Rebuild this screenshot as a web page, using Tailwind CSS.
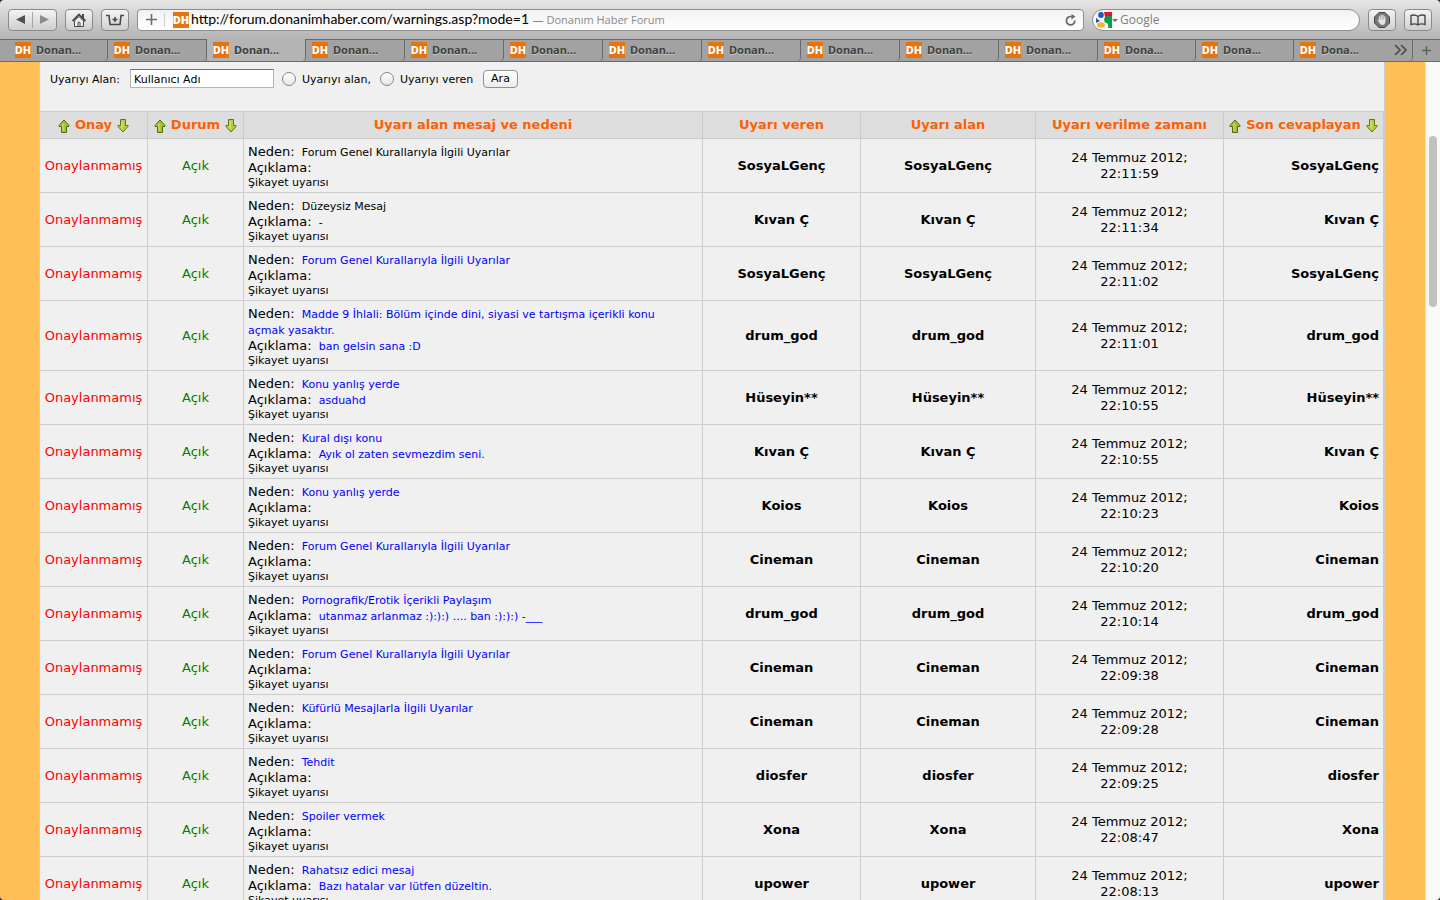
<!DOCTYPE html>
<html lang="tr">
<head>
<meta charset="utf-8">
<title>Donanım Haber Forum</title>
<script src="https://cdn.jsdelivr.net/npm/@tailwindcss/browser@4"></script>
</head>
<body class="flex h-screen flex-col overflow-hidden bg-[#222222] font-['DejaVu_Sans',sans-serif] text-black">

<svg class="hidden">
  <symbol id="up" viewBox="0 0 12 14">
    <path d="M6 1 11 6.500V7.500H8.500V13.500H3.500V7.500H1V6.500Z" fill="#a3c234" stroke="#4f6a0c" stroke-linejoin="round"/>
    <path d="M5 4.500V12" stroke="#cfe37a"/>
  </symbol>
  <symbol id="down" viewBox="0 0 12 14">
    <path d="M6 13 11 7.500V6.500H8.500V.5H3.500V6.500H1V7.500Z" fill="#b4cf45" stroke="#5c7810" stroke-linejoin="round"/>
    <path d="M5 2V10" stroke="#d8ea88"/>
  </symbol>
</svg>

<header class="shrink-0 overflow-hidden rounded-t font-['Open_Sans',sans-serif]">
  <div class="flex h-[39px] items-center bg-linear-to-b from-[#e6e6e6] to-[#b4b4b4] px-2">
    <nav class="flex gap-2" aria-label="Tarayıcı">
      <div class="flex h-[22px] w-[49px] items-center rounded border border-[#8a8a8a] bg-linear-to-b from-[#f4f4f4] to-[#cfcfcf]">
        <button class="flex h-full flex-1 items-center justify-center" aria-label="Geri"><svg class="h-[9px] w-[9px]" viewBox="0 0 9 9"><path d="M9 0V9L0 4.500Z" fill="#505050"/></svg></button>
        <span class="h-4 w-px bg-[#a5a5a5]"></span>
        <button class="flex h-full flex-1 items-center justify-center" aria-label="İleri"><svg class="h-[9px] w-[9px]" viewBox="0 0 9 9"><path d="M0 0V9L9 4.500Z" fill="#8c8c8c"/></svg></button>
      </div>
      <button class="flex h-[22px] w-7 items-center justify-center rounded border border-[#8a8a8a] bg-linear-to-b from-[#f4f4f4] to-[#cfcfcf]" aria-label="Ana sayfa">
        <svg class="h-[14px] w-[14px]" viewBox="0 0 14 14"><path d="M7 3.500 2.500 8V13.500H11.500V8Z" fill="#f0f0f0" stroke="#484848"/><path d="M.5 8 7 1.500 13.500 8" fill="none" stroke="#484848" stroke-width="1.800"/><path d="M10 1H12V6L10 4Z" fill="#484848"/><path d="M6 13V9.500Q7 8.500 8 9.500V13" fill="none" stroke="#484848"/></svg>
      </button>
      <button class="flex h-[22px] w-7 items-center justify-center rounded border border-[#8a8a8a] bg-linear-to-b from-[#f4f4f4] to-[#cfcfcf]" aria-label="Sepet">
        <svg class="h-3 w-[18px]" viewBox="0 0 18 12" fill="none" stroke="#484848" stroke-width="1.600"><path d="M0 1.500H3L4 10.500H14L15 1.500H18M9 3V8M6.500 5.500H11.500"/></svg>
      </button>
    </nav>
    <div class="ml-2 flex h-[22px] min-w-0 flex-1 items-center rounded border border-[#8e8e8e] bg-linear-to-b from-[#f2f2f2] to-white">
      <button class="flex h-[14px] w-[27px] items-center justify-center border-r border-[#cfcfcf]" aria-label="Ekle"><svg class="h-[11px] w-[11px]" viewBox="0 0 11 11"><path d="M5.500 0V11M0 5.500H11" stroke="#6c6c6c" stroke-width="1.600"/></svg></button>
      <span class="ml-2 flex h-4 w-4 shrink-0 items-center justify-center bg-[#e5740f] text-[11px] leading-4 font-extrabold text-white">DH</span>
      <p class="ml-[2px] flex-1 truncate pb-px font-['Lato',sans-serif] text-sm leading-5"><span>http://forum.donanimhaber.com/warnings.asp?mode=1</span> <span class="font-['Open_Sans',sans-serif] text-[11px] text-[#8a8a8a]">— Donanım Haber Forum</span></p>
      <button class="mr-[6px]" aria-label="Yenile"><svg class="h-3 w-3" viewBox="0 0 12 12"><path d="M9.800 6.500A4.200 4.200 0 1 1 6 2.500H8" fill="none" stroke="#6a6a6a" stroke-width="1.700"/><path d="M6.500 0 10.500 2.500 6.500 5.500Z" fill="#6a6a6a"/></svg></button>
    </div>
    <div class="ml-2 flex h-[22px] w-[268px] items-center rounded-full border border-[#8e8e8e] bg-linear-to-b from-[#f2f2f2] to-white pl-[3px]">
      <svg class="h-4 w-[22px] shrink-0" viewBox="0 0 22 16"><path d="M8 0H16V5H9Z" fill="#e8112a"/><path d="M8 7Q9 4 12 4H16V16H12Q13 11 10 11Q8 10 8 7Z" fill="#0b9d47"/><ellipse cx="5" cy="3" rx="2.800" ry="3" fill="#1f57b5"/><path d="M0 6 4 9 0 11Z" fill="#1f57b5"/><ellipse cx="5" cy="13" rx="4" ry="2.800" fill="#f3b62f"/><path d="M16 7H22L19 10Z" fill="#6a6a6a"/></svg>
      <input type="search" aria-label="Google" placeholder="Google" class="ml-[2px] w-full bg-transparent text-xs outline-none placeholder:text-[#808080]">
    </div>
    <div class="ml-2 flex gap-2">
      <button class="flex h-[22px] w-7 items-center justify-center rounded border border-[#8a8a8a] bg-linear-to-b from-[#f4f4f4] to-[#cfcfcf]" aria-label="Engelle"><svg class="h-4 w-4" viewBox="0 0 16 16"><path d="M5 .5H11L15.500 5V11L11 15.500H5L.5 11V5Z" fill="#777" stroke="#444"/><path d="M5.500 9V5M7.200 8V3.500M9 8V3.500M10.700 9V5" stroke="#e4e4e4" stroke-width="1.300" stroke-linecap="round"/><path d="M5 7.500H11.300V10Q11 13 8.500 13T5 10L3.500 8.500L4.500 8Z" fill="#e4e4e4"/></svg></button>
      <button class="flex h-[22px] w-7 items-center justify-center rounded border border-[#8a8a8a] bg-linear-to-b from-[#f4f4f4] to-[#cfcfcf]" aria-label="Okuma listesi"><svg class="h-3 w-4" viewBox="0 0 16 12" fill="none" stroke="#484848" stroke-width="1.400"><path d="M8 2.500Q5 0 1 1.500V10.500Q5 9 8 11Q11 9 15 10.500V1.500Q11 0 8 2.500V11"/></svg></button>
    </div>
  </div>
  <div id="tabs" class="flex h-[23px] border-y border-[#6a6a6a] bg-[#a2a2a2] pl-[9px]"></div>
</header>

<div class="flex min-h-0 flex-1 overflow-hidden rounded-b">
  <main class="flex min-w-0 flex-1 overflow-hidden bg-[#ffbf56] pr-10 pl-[39px]">
    <div class="min-w-0 flex-1 border-x border-[#cccccc] bg-[#f0f0f0]">
      <form class="flex h-[49px] items-start pt-[7px] pl-[10px] text-[11px] leading-[22px]">
        <label for="user" class="w-20">Uyarıyı Alan:</label>
        <input id="user" type="text" value="Kullanıcı Adı" class="h-[19px] w-36 border border-[#b5b5b5] border-t-[#707070] bg-white px-[3px] pt-px leading-4">
        <input id="alan" type="radio" name="kim" class="mt-[3px] ml-2 h-[14px] w-[14px] appearance-none rounded-full border border-[#868686] bg-linear-to-b from-white to-[#e6e6e6]">
        <label for="alan" class="w-[84px] pl-[6px]">Uyarıyı alan,</label>
        <input id="veren" type="radio" name="kim" class="mt-[3px] h-[14px] w-[14px] appearance-none rounded-full border border-[#868686] bg-linear-to-b from-white to-[#e6e6e6]">
        <label for="veren" class="w-[89px] pl-[6px]">Uyarıyı veren</label>
        <button type="button" class="mt-px h-[18px] w-[35px] rounded border border-[#909090] bg-linear-to-b from-white to-[#ececec] leading-4">Ara</button>
      </form>
      <table class="w-full table-fixed border-separate border-spacing-0 border-t border-[#cccccc] text-[13px] leading-4">
        <colgroup><col class="w-[108px]"><col class="w-24"><col><col class="w-[158px]"><col class="w-[175px]"><col class="w-[188px]"><col class="w-40"></colgroup>
        <thead class="bg-[#dedede] text-[#ff6000]">
          <tr id="head"></tr>
        </thead>
        <tbody id="rows"></tbody>
      </table>
    </div>
  </main>
  <div class="w-[15px] border-l border-[#e4e4e4] bg-[#fafafa] pt-[74px]">
    <div class="ml-[3px] h-[171px] w-2 rounded-full bg-[#c1c1c1]"></div>
  </div>
</div>

<script>
const favicon = '<span class="flex h-4 w-4 shrink-0 items-center justify-center bg-[#e5740f] text-[11px] leading-4 font-extrabold text-white [text-shadow:none]">DH</span>';
let tabs = '';
for (let i = 0; i < 14; i++) {
  const width = i === 13 ? 'w-[119px]' : i > 10 ? 'w-[98px]' : 'w-[99px]';
  const look = i === 2 ? '-mt-px pt-px bg-[#b4b4b4]' : 'bg-[#a2a2a2]';
  tabs += `<button class="${width} ${look} flex shrink-0 items-center gap-[5px] rounded-b border-r border-[#6a6a6a] pb-px pl-[6px] font-['Noto_Sans',sans-serif] text-[11px] font-bold text-[#404040] [text-shadow:0_1px_0_#c8c8c8]">${favicon}<span>${i > 10 ? 'Dona...' : 'Donan...'}</span>${i === 13 ? '<svg class="mr-1 ml-auto h-[10px] w-[14px]" viewBox="0 0 14 10"><path d="M1 0 6 5 1 10M7 0 12 5 7 10" fill="none" stroke="#4c4c4c" stroke-width="1.700"/></svg>' : ''}</button>`;
}
tabs += '<button class="flex flex-1 items-center justify-center" aria-label="Yeni sekme"><svg class="h-[9px] w-[9px]" viewBox="0 0 9 9"><path d="M4.500 0V9M0 4.500H9" stroke="#606060" stroke-width="1.500"/></svg></button>';
document.getElementById('tabs').innerHTML = tabs;

const heads = [['Onay', 1], ['Durum', 1], ['Uyarı alan mesaj ve nedeni'], ['Uyarı veren'], ['Uyarı alan'], ['Uyarı verilme zamanı'], ['Son cevaplayan', 1]];
document.getElementById('head').innerHTML = heads.map(([t, sort]) =>
  `<th scope="col" class="h-[27px] border-r border-b border-[#cccccc] whitespace-nowrap">${sort
    ? `<span class="flex items-center justify-center gap-[5px]"><a href="#" aria-label="Artan"><svg class="mt-[2px] h-[14px] w-3"><use href="#up"/></svg></a>${t}<a href="#" aria-label="Azalan"><svg class="mt-[2px] h-[14px] w-3"><use href="#down"/></svg></a></span>` : t}</th>`).join('');

// neden, açıklama, kullanıcı, saat, bağlantısız
const rows = [
  ['Forum Genel Kurallarıyla İlgili Uyarılar', '', 'SosyaLGenç', '22:11:59', 1],
  ['Düzeysiz Mesaj', '-', 'Kıvan Ç', '22:11:34', 1],
  ['Forum Genel Kurallarıyla İlgili Uyarılar', '', 'SosyaLGenç', '22:11:02'],
  ['Madde 9 İhlali: Bölüm içinde dini, siyasi ve tartışma içerikli konu açmak yasaktır.', 'ban gelsin sana :D', 'drum_god', '22:11:01'],
  ['Konu yanlış yerde', 'asduahd', 'Hüseyin**', '22:10:55'],
  ['Kural dışı konu', 'Ayık ol zaten sevmezdim seni.', 'Kıvan Ç', '22:10:55'],
  ['Konu yanlış yerde', '', 'Koios', '22:10:23'],
  ['Forum Genel Kurallarıyla İlgili Uyarılar', '', 'Cineman', '22:10:20'],
  ['Pornografik/Erotik İçerikli Paylaşım', 'utanmaz arlanmaz :):):) .... ban :):):) -___', 'drum_god', '22:10:14'],
  ['Forum Genel Kurallarıyla İlgili Uyarılar', '', 'Cineman', '22:09:38'],
  ['Küfürlü Mesajlarla İlgili Uyarılar', '', 'Cineman', '22:09:28'],
  ['Tehdit', '', 'diosfer', '22:09:25'],
  ['Spoiler vermek', '', 'Xona', '22:08:47'],
  ['Rahatsız edici mesaj', 'Bazı hatalar var lütfen düzeltin.', 'upower', '22:08:13'],
];
const text = (t, plain) => plain ? `<span class="ml-[3px] text-[11px] leading-3">${t}</span>` : `<a href="#" class="ml-[3px] text-[11px] leading-3 text-[#0000ff]">${t}</a>`;
document.getElementById('rows').innerHTML = rows.map(([reason, note, user, time, plain]) => `<tr>
  <td class="border-r border-b border-[#cccccc] text-center text-[#ff0000]">Onaylanmamış</td>
  <td class="border-r border-b border-[#cccccc] text-center text-[#008000]">Açık</td>
  <td class="border-r border-b border-[#cccccc] pt-[5px] pr-4 pb-[2px] pl-1">
    <p>Neden: ${text(reason, plain)}</p>
    <p>Açıklama: ${text(note, plain)}</p>
    <p class="text-[11px] leading-[14px]">Şikayet uyarısı</p>
  </td>
  <td class="border-r border-b border-[#cccccc] text-center font-bold">${user}</td>
  <td class="border-r border-b border-[#cccccc] text-center font-bold">${user}</td>
  <td class="border-r border-b border-[#cccccc] text-center">24 Temmuz 2012;<br>${time}</td>
  <td class="border-r border-b border-[#cccccc] pr-1 text-right font-bold">${user}</td>
</tr>`).join('');
</script>
</body>
</html>
